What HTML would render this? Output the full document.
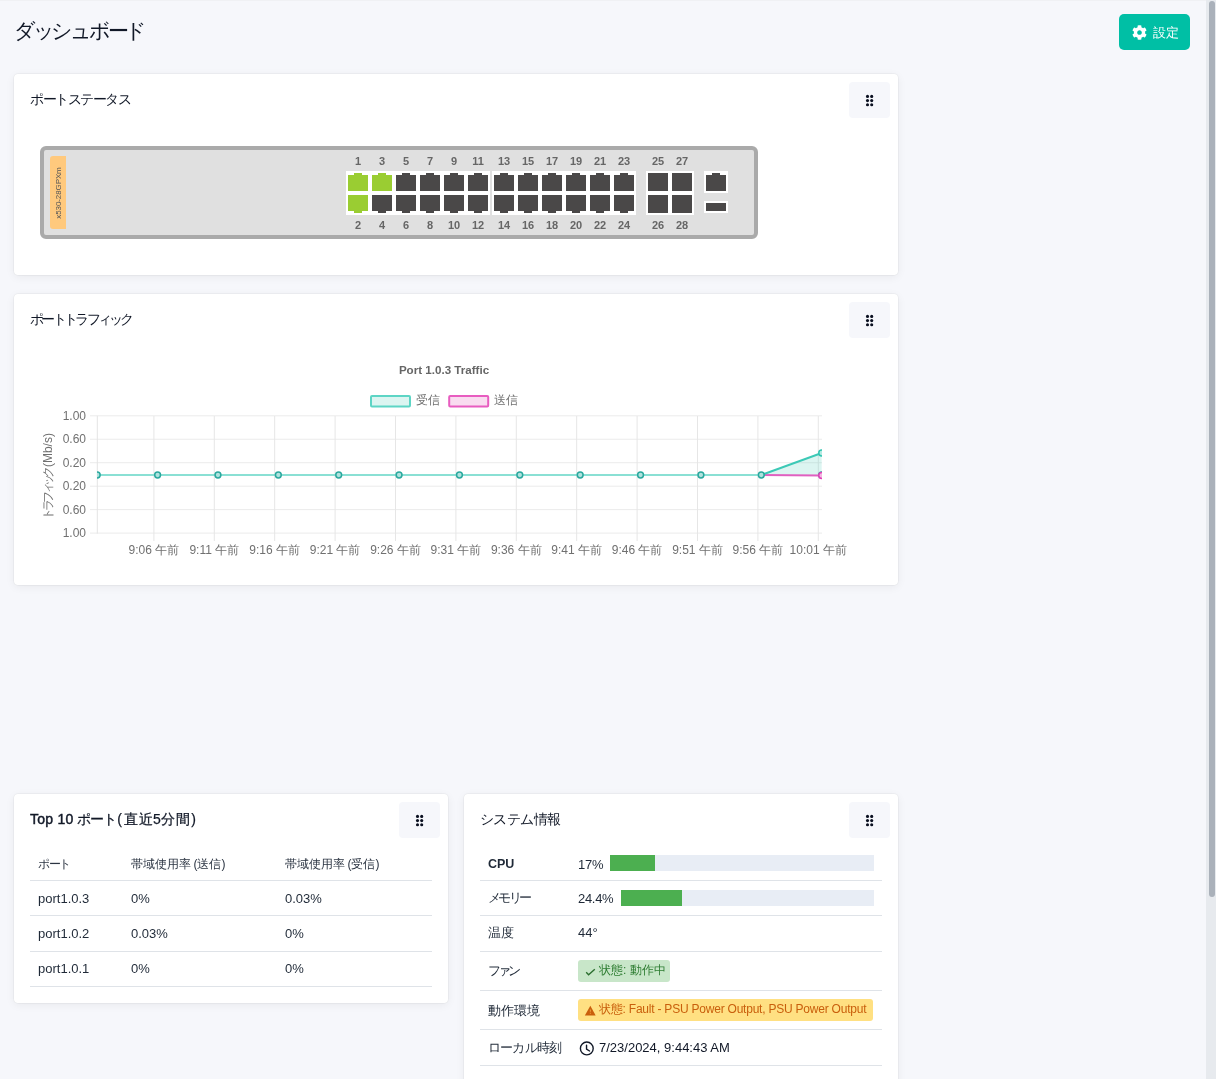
<!DOCTYPE html>
<html><head><meta charset="utf-8">
<style>
html,body{margin:0;padding:0;}
body{width:1216px;height:1079px;overflow:hidden;background:#f6f7fb;font-family:"Liberation Sans", sans-serif;color:#111827;position:relative;}
.topline{position:absolute;left:0;top:0;width:1206px;height:1px;background:#f0f1f4;}
.abs{position:absolute;}
.card{position:absolute;background:#fff;border-radius:4px;box-shadow:0 0 0 1px rgba(0,0,0,0.03),0 0 1px rgba(0,0,0,0.08),0 2px 10px rgba(0,0,0,0.06);}
.ct{position:absolute;font-size:14px;color:#111827;line-height:16px;white-space:nowrap;}
.mb{position:absolute;width:41px;height:36px;background:#f6f7fb;border-radius:4px;}
.mb svg{position:absolute;left:16px;top:12px;fill:#0b1020;}
.wb{position:absolute;background:#fff;}
.pt,.pb,.sq,.dk{position:absolute;width:20px;background:#4a4848;}
.pt{height:18px;clip-path:polygon(0 2px,6px 2px,6px 0,14px 0,14px 2px,20px 2px,20px 18px,0 18px);}
.pb{height:18px;clip-path:polygon(0 0,20px 0,20px 16px,14px 16px,14px 18px,6px 18px,6px 16px,0 16px);}
.sq{height:18px;}
.g{background:#9acd32;}
.lbl{position:absolute;width:40px;text-align:center;font-size:11px;font-weight:bold;color:#666;line-height:14px;}
.scroll{position:absolute;left:1206px;top:0;width:10px;height:1079px;background:#e7eaee;}
.thumb{position:absolute;left:1209px;top:1px;width:6px;height:896px;background:#aab1ba;border-radius:3px;}
.hl{position:absolute;height:1px;background:#dfe3e8;}
.th{position:absolute;font-size:12px;line-height:16px;color:#2b3442;white-space:nowrap;}
.td{position:absolute;font-size:13px;line-height:16px;color:#1f2937;white-space:nowrap;}
.bar{position:absolute;height:16px;background:#e8edf5;}
.bar i{position:absolute;left:0;top:0;height:16px;background:#4caf50;}
</style></head><body>
<div id="root" style="position:absolute;left:0;top:0;width:1216px;height:1079px;will-change:transform">
<div class="topline"></div>
<div class="abs" style="left:14px;top:18px;font-size:21px;line-height:26px;color:#111827;letter-spacing:-3.3px">ダッシュボード</div>
<div class="abs" style="left:1119px;top:14px;width:71px;height:36px;background:#00bfa5;border-radius:5px;"></div>
<svg class="abs" style="left:1132px;top:25px" width="15" height="15" viewBox="0 0 512 512"><path fill="#fff" d="M487.4 315.7l-42.6-24.6c4.3-23.2 4.3-47 0-70.2l42.6-24.6c4.9-2.8 7.1-8.6 5.5-14-11.1-35.6-30-67.8-54.7-94.6-3.8-4.1-10-5.1-14.8-2.3L380.8 110c-17.9-15.4-38.5-27.3-60.8-35.1V25.8c0-5.6-3.9-10.5-9.4-11.7-36.7-8.2-74.3-7.8-109.2 0-5.5 1.2-9.4 6.1-9.4 11.7V75c-22.2 7.9-42.8 19.8-60.8 35.1L88.7 85.5c-4.9-2.8-11-1.9-14.8 2.3-24.7 26.7-43.6 58.9-54.7 94.6-1.7 5.4.6 11.2 5.5 14L67.3 221c-4.3 23.2-4.3 47 0 70.2l-42.6 24.6c-4.9 2.8-7.1 8.6-5.5 14 11.1 35.6 30 67.8 54.7 94.6 3.8 4.1 10 5.1 14.8 2.3l42.6-24.6c17.9 15.4 38.5 27.3 60.8 35.1v49.2c0 5.6 3.9 10.5 9.4 11.7 36.7 8.2 74.3 7.8 109.2 0 5.5-1.2 9.4-6.1 9.4-11.7v-49.2c22.2-7.9 42.8-19.8 60.8-35.1l42.6 24.6c4.9 2.8 11 1.9 14.8-2.3 24.7-26.7 43.6-58.9 54.7-94.6 1.5-5.5-.7-11.3-5.6-14.1zM256 336c-44.1 0-80-35.9-80-80s35.9-80 80-80 80 35.9 80 80-35.9 80-80 80z"/></svg>
<div class="abs" style="left:1153px;top:24.5px;font-size:12.5px;line-height:16px;color:#fff">設定</div>

<div class="card" style="left:14px;top:74px;width:884px;height:201px"></div>
<div class="ct" style="left:30px;top:91px;letter-spacing:-1.45px">ポートステータス</div>
<div class="mb" style="left:849px;top:82px"><svg width="9" height="13" viewBox="0 0 9 13"><circle cx="2.5" cy="2.4" r="1.55"/><circle cx="6.7" cy="2.4" r="1.55"/><circle cx="2.5" cy="6.6" r="1.55"/><circle cx="6.7" cy="6.6" r="1.55"/><circle cx="2.5" cy="10.8" r="1.55"/><circle cx="6.7" cy="10.8" r="1.55"/></svg></div>
<div class="abs" style="left:40px;top:146px;width:710px;height:85px;border:4px solid #aaa;border-radius:6px;background:#e0e0e0"></div>
<div class="abs" style="left:50px;top:156px;width:16px;height:73px;background:#ffc97d;border-radius:3px 0 0 3px"></div>
<div class="abs" style="left:58.8px;top:193px;width:0;height:0"><div style="position:absolute;left:-40px;top:-6px;width:80px;text-align:center;font-size:8px;line-height:12px;color:#555;letter-spacing:-0.1px;transform:rotate(-90deg)">x530-28GPXm</div></div>
<div class="wb" style="left:346px;top:171px;width:144px;height:44px"></div>
<div class="pt g" style="left:348px;top:173px"></div>
<div class="pb g" style="left:348px;top:195px"></div>
<div class="lbl" style="left:338px;top:154px">1</div>
<div class="lbl" style="left:338px;top:218px">2</div>
<div class="pt g" style="left:372px;top:173px"></div>
<div class="pb " style="left:372px;top:195px"></div>
<div class="lbl" style="left:362px;top:154px">3</div>
<div class="lbl" style="left:362px;top:218px">4</div>
<div class="pt " style="left:396px;top:173px"></div>
<div class="pb " style="left:396px;top:195px"></div>
<div class="lbl" style="left:386px;top:154px">5</div>
<div class="lbl" style="left:386px;top:218px">6</div>
<div class="pt " style="left:420px;top:173px"></div>
<div class="pb " style="left:420px;top:195px"></div>
<div class="lbl" style="left:410px;top:154px">7</div>
<div class="lbl" style="left:410px;top:218px">8</div>
<div class="pt " style="left:444px;top:173px"></div>
<div class="pb " style="left:444px;top:195px"></div>
<div class="lbl" style="left:434px;top:154px">9</div>
<div class="lbl" style="left:434px;top:218px">10</div>
<div class="pt " style="left:468px;top:173px"></div>
<div class="pb " style="left:468px;top:195px"></div>
<div class="lbl" style="left:458px;top:154px">11</div>
<div class="lbl" style="left:458px;top:218px">12</div>
<div class="wb" style="left:492px;top:171px;width:144px;height:44px"></div>
<div class="pt " style="left:494px;top:173px"></div>
<div class="pb " style="left:494px;top:195px"></div>
<div class="lbl" style="left:484px;top:154px">13</div>
<div class="lbl" style="left:484px;top:218px">14</div>
<div class="pt " style="left:518px;top:173px"></div>
<div class="pb " style="left:518px;top:195px"></div>
<div class="lbl" style="left:508px;top:154px">15</div>
<div class="lbl" style="left:508px;top:218px">16</div>
<div class="pt " style="left:542px;top:173px"></div>
<div class="pb " style="left:542px;top:195px"></div>
<div class="lbl" style="left:532px;top:154px">17</div>
<div class="lbl" style="left:532px;top:218px">18</div>
<div class="pt " style="left:566px;top:173px"></div>
<div class="pb " style="left:566px;top:195px"></div>
<div class="lbl" style="left:556px;top:154px">19</div>
<div class="lbl" style="left:556px;top:218px">20</div>
<div class="pt " style="left:590px;top:173px"></div>
<div class="pb " style="left:590px;top:195px"></div>
<div class="lbl" style="left:580px;top:154px">21</div>
<div class="lbl" style="left:580px;top:218px">22</div>
<div class="pt " style="left:614px;top:173px"></div>
<div class="pb " style="left:614px;top:195px"></div>
<div class="lbl" style="left:604px;top:154px">23</div>
<div class="lbl" style="left:604px;top:218px">24</div>
<div class="wb" style="left:646px;top:171px;width:48px;height:44px"></div>
<div class="sq" style="left:648px;top:173px"></div>
<div class="sq" style="left:648px;top:195px"></div>
<div class="lbl" style="left:638px;top:154px">25</div>
<div class="lbl" style="left:638px;top:218px">26</div>
<div class="sq" style="left:672px;top:173px"></div>
<div class="sq" style="left:672px;top:195px"></div>
<div class="lbl" style="left:662px;top:154px">27</div>
<div class="lbl" style="left:662px;top:218px">28</div>
<div class="wb" style="left:704px;top:171px;width:24px;height:22px"></div>
<div class="pt" style="left:706px;top:173px"></div>
<div class="wb" style="left:704px;top:201px;width:24px;height:12px"></div>
<div class="dk" style="left:706px;top:203px;width:20px;height:8px"></div>

<div class="card" style="left:14px;top:294px;width:884px;height:291px"></div>
<div class="ct" style="left:30px;top:311px;letter-spacing:-2.7px">ポートトラフィック</div>
<div class="mb" style="left:849px;top:302px"><svg width="9" height="13" viewBox="0 0 9 13"><circle cx="2.5" cy="2.4" r="1.55"/><circle cx="6.7" cy="2.4" r="1.55"/><circle cx="2.5" cy="6.6" r="1.55"/><circle cx="6.7" cy="6.6" r="1.55"/><circle cx="2.5" cy="10.8" r="1.55"/><circle cx="6.7" cy="10.8" r="1.55"/></svg></div>
<svg class="chart" width="1216" height="1079" viewBox="0 0 1216 1079" style="position:absolute;left:0;top:0">
<line x1="90" y1="415.8" x2="822" y2="415.8" stroke="#ebebeb" stroke-width="1"/>
<text x="86" y="420.0" text-anchor="end" font-size="12" fill="#707070" font-family='Liberation Sans'>1.00</text>
<line x1="90" y1="439.26" x2="822" y2="439.26" stroke="#ebebeb" stroke-width="1"/>
<text x="86" y="443.46" text-anchor="end" font-size="12" fill="#707070" font-family='Liberation Sans'>0.60</text>
<line x1="90" y1="462.72" x2="822" y2="462.72" stroke="#ebebeb" stroke-width="1"/>
<text x="86" y="466.92" text-anchor="end" font-size="12" fill="#707070" font-family='Liberation Sans'>0.20</text>
<line x1="90" y1="486.18" x2="822" y2="486.18" stroke="#ebebeb" stroke-width="1"/>
<text x="86" y="490.38" text-anchor="end" font-size="12" fill="#707070" font-family='Liberation Sans'>0.20</text>
<line x1="90" y1="509.64" x2="822" y2="509.64" stroke="#ebebeb" stroke-width="1"/>
<text x="86" y="513.84" text-anchor="end" font-size="12" fill="#707070" font-family='Liberation Sans'>0.60</text>
<line x1="90" y1="533.1" x2="822" y2="533.1" stroke="#ebebeb" stroke-width="1"/>
<text x="86" y="537.3" text-anchor="end" font-size="12" fill="#707070" font-family='Liberation Sans'>1.00</text>
<line x1="97.3" y1="415.8" x2="97.3" y2="533.6" stroke="#e4e4e4"/>
<line x1="153.9" y1="416" x2="153.9" y2="541" stroke="#e6e6e6"/>
<text x="153.9" y="554" text-anchor="middle" font-size="12" fill="#707070" font-family='Liberation Sans'>9:06 午前</text>
<line x1="214.3" y1="416" x2="214.3" y2="541" stroke="#e6e6e6"/>
<text x="214.3" y="554" text-anchor="middle" font-size="12" fill="#707070" font-family='Liberation Sans'>9:11 午前</text>
<line x1="274.7" y1="416" x2="274.7" y2="541" stroke="#e6e6e6"/>
<text x="274.7" y="554" text-anchor="middle" font-size="12" fill="#707070" font-family='Liberation Sans'>9:16 午前</text>
<line x1="335.1" y1="416" x2="335.1" y2="541" stroke="#e6e6e6"/>
<text x="335.1" y="554" text-anchor="middle" font-size="12" fill="#707070" font-family='Liberation Sans'>9:21 午前</text>
<line x1="395.5" y1="416" x2="395.5" y2="541" stroke="#e6e6e6"/>
<text x="395.5" y="554" text-anchor="middle" font-size="12" fill="#707070" font-family='Liberation Sans'>9:26 午前</text>
<line x1="455.9" y1="416" x2="455.9" y2="541" stroke="#e6e6e6"/>
<text x="455.9" y="554" text-anchor="middle" font-size="12" fill="#707070" font-family='Liberation Sans'>9:31 午前</text>
<line x1="516.3" y1="416" x2="516.3" y2="541" stroke="#e6e6e6"/>
<text x="516.3" y="554" text-anchor="middle" font-size="12" fill="#707070" font-family='Liberation Sans'>9:36 午前</text>
<line x1="576.7" y1="416" x2="576.7" y2="541" stroke="#e6e6e6"/>
<text x="576.7" y="554" text-anchor="middle" font-size="12" fill="#707070" font-family='Liberation Sans'>9:41 午前</text>
<line x1="637.1" y1="416" x2="637.1" y2="541" stroke="#e6e6e6"/>
<text x="637.1" y="554" text-anchor="middle" font-size="12" fill="#707070" font-family='Liberation Sans'>9:46 午前</text>
<line x1="697.5" y1="416" x2="697.5" y2="541" stroke="#e6e6e6"/>
<text x="697.5" y="554" text-anchor="middle" font-size="12" fill="#707070" font-family='Liberation Sans'>9:51 午前</text>
<line x1="757.9" y1="416" x2="757.9" y2="541" stroke="#e6e6e6"/>
<text x="757.9" y="554" text-anchor="middle" font-size="12" fill="#707070" font-family='Liberation Sans'>9:56 午前</text>
<line x1="818.3" y1="416" x2="818.3" y2="541" stroke="#e6e6e6"/>
<text x="818.3" y="554" text-anchor="middle" font-size="12" fill="#707070" font-family='Liberation Sans'>10:01 午前</text>
<text transform="translate(51.6,476.3) rotate(-90)" text-anchor="middle" font-size="12" fill="#707070" font-family='Liberation Sans'><tspan style="letter-spacing:-3.6px">トラフィック</tspan><tspan dx="2">(Mb/s)</tspan></text>
<text x="444" y="373.5" text-anchor="middle" font-size="11.6" font-weight="bold" fill="#666" font-family='Liberation Sans'>Port 1.0.3 Traffic</text>
<rect x="371" y="396" width="39" height="10.5" fill="#dcf5f1" stroke="#5dd5c5" stroke-width="2" rx="1"/>
<text x="416" y="404" font-size="12" fill="#707070" font-family='Liberation Sans'>受信</text>
<rect x="449.2" y="396" width="39" height="10.5" fill="#f9dcf0" stroke="#e85cc0" stroke-width="2" rx="1"/>
<text x="494" y="404" font-size="12" fill="#707070" font-family='Liberation Sans'>送信</text>
<defs><clipPath id="ca"><rect x="97" y="410" width="725" height="130"/></clipPath></defs>
<g clip-path="url(#ca)">
<polygon points="761.3,475 821.67,453 821.67,475" fill="rgba(60,200,175,0.18)"/>
<polyline points="97.23,475 761.3,475 821.67,475.5" fill="none" stroke="#e060c0" stroke-width="2"/>
<polyline points="97.23,475 761.3,475" fill="none" stroke="#8ae0d4" stroke-width="2"/>
<polyline points="761.3,475 821.67,453" fill="none" stroke="#3cc9b6" stroke-width="2"/>
<circle cx="97.23" cy="475" r="2.9" fill="#b0e3de" stroke="#2aa89e" stroke-width="1.5"/>
<circle cx="157.6" cy="475" r="2.9" fill="#b0e3de" stroke="#2aa89e" stroke-width="1.5"/>
<circle cx="217.97" cy="475" r="2.9" fill="#b0e3de" stroke="#2aa89e" stroke-width="1.5"/>
<circle cx="278.34" cy="475" r="2.9" fill="#b0e3de" stroke="#2aa89e" stroke-width="1.5"/>
<circle cx="338.71" cy="475" r="2.9" fill="#b0e3de" stroke="#2aa89e" stroke-width="1.5"/>
<circle cx="399.08" cy="475" r="2.9" fill="#b0e3de" stroke="#2aa89e" stroke-width="1.5"/>
<circle cx="459.45" cy="475" r="2.9" fill="#b0e3de" stroke="#2aa89e" stroke-width="1.5"/>
<circle cx="519.82" cy="475" r="2.9" fill="#b0e3de" stroke="#2aa89e" stroke-width="1.5"/>
<circle cx="580.19" cy="475" r="2.9" fill="#b0e3de" stroke="#2aa89e" stroke-width="1.5"/>
<circle cx="640.56" cy="475" r="2.9" fill="#b0e3de" stroke="#2aa89e" stroke-width="1.5"/>
<circle cx="700.93" cy="475" r="2.9" fill="#b0e3de" stroke="#2aa89e" stroke-width="1.5"/>
<circle cx="761.3" cy="475" r="2.9" fill="#b0e3de" stroke="#2aa89e" stroke-width="1.5"/>
<circle cx="821.67" cy="475" r="2.9" fill="#b0e3de" stroke="#2aa89e" stroke-width="1.5"/>
<circle cx="821.67" cy="453" r="2.9" fill="#b5ebe3" stroke="#30c4b0" stroke-width="1.5"/>
<circle cx="821.67" cy="475.5" r="2.9" fill="#f3b5e0" stroke="#e040b8" stroke-width="1.5"/>
</g>
</svg>

<div class="card" style="left:14px;top:794px;width:434px;height:209px"></div>
<div class="ct" style="left:30px;top:811px;"><span style="-webkit-text-stroke:0.45px #111827;letter-spacing:0.25px">Top 10</span> <span style="letter-spacing:-1.2px;-webkit-text-stroke:0.25px #111827">ポート</span><span style="margin-left:1.5px;-webkit-text-stroke:0.25px #111827">(<span style="margin-left:2px;letter-spacing:0.5px">直近5分間</span><span style="margin-left:1px">)</span></span></div>
<div class="mb" style="left:399px;top:802px"><svg width="9" height="13" viewBox="0 0 9 13"><circle cx="2.5" cy="2.4" r="1.55"/><circle cx="6.7" cy="2.4" r="1.55"/><circle cx="2.5" cy="6.6" r="1.55"/><circle cx="6.7" cy="6.6" r="1.55"/><circle cx="2.5" cy="10.8" r="1.55"/><circle cx="6.7" cy="10.8" r="1.55"/></svg></div>
<div class="hl" style="left:30px;top:880px;width:402px"></div>
<div class="hl" style="left:30px;top:915px;width:402px"></div>
<div class="hl" style="left:30px;top:951px;width:402px"></div>
<div class="hl" style="left:30px;top:986px;width:402px"></div>
<div class="th" style="left:38px;top:856px;letter-spacing:-1.5px">ポート</div>
<div class="th" style="left:131px;top:856px">帯域使用率<span style="margin-left:2.5px">(送信)</span></div>
<div class="th" style="left:285px;top:856px">帯域使用率<span style="margin-left:2.5px">(受信)</span></div>
<div class="td" style="left:38px;top:891px">port1.0.3</div>
<div class="td" style="left:131px;top:891px">0%</div>
<div class="td" style="left:285px;top:891px">0.03%</div>
<div class="td" style="left:38px;top:926px">port1.0.2</div>
<div class="td" style="left:131px;top:926px">0.03%</div>
<div class="td" style="left:285px;top:926px">0%</div>
<div class="td" style="left:38px;top:961px">port1.0.1</div>
<div class="td" style="left:131px;top:961px">0%</div>
<div class="td" style="left:285px;top:961px">0%</div>

<div class="card" style="left:464px;top:794px;width:434px;height:300px"></div>
<div class="ct" style="left:480px;top:811px;letter-spacing:-0.6px">システム情報</div>
<div class="mb" style="left:849px;top:802px"><svg width="9" height="13" viewBox="0 0 9 13"><circle cx="2.5" cy="2.4" r="1.55"/><circle cx="6.7" cy="2.4" r="1.55"/><circle cx="2.5" cy="6.6" r="1.55"/><circle cx="6.7" cy="6.6" r="1.55"/><circle cx="2.5" cy="10.8" r="1.55"/><circle cx="6.7" cy="10.8" r="1.55"/></svg></div>
<div class="hl" style="left:480px;top:880px;width:402px"></div>
<div class="hl" style="left:480px;top:915px;width:402px"></div>
<div class="hl" style="left:480px;top:951px;width:402px"></div>
<div class="hl" style="left:480px;top:990px;width:402px"></div>
<div class="hl" style="left:480px;top:1029px;width:402px"></div>
<div class="hl" style="left:480px;top:1065px;width:402px"></div>
<div class="td" style="left:488px;top:856px;font-weight:bold;font-size:12.5px">CPU</div>
<div class="td" style="left:488px;top:890px;letter-spacing:-2.7px">メモリー</div>
<div class="td" style="left:488px;top:925px">温度</div>
<div class="td" style="left:488px;top:963px;letter-spacing:-3px">ファン</div>
<div class="td" style="left:488px;top:1003px">動作環境</div>
<div class="td" style="left:488px;top:1040px;letter-spacing:-0.8px">ローカル時刻</div>
<div class="td" style="left:578px;top:857px;letter-spacing:-0.2px">17%</div>
<div class="td" style="left:578px;top:891px;letter-spacing:-0.3px">24.4%</div>
<div class="td" style="left:578px;top:925px">44°</div>
<div class="bar" style="left:610px;top:855px;width:264px"><i style="width:45px"></i></div>
<div class="bar" style="left:621px;top:890px;width:253px"><i style="width:61px"></i></div>
<div class="abs" style="left:578px;top:960px;width:92px;height:22px;background:#c8e6c9;border-radius:3px"></div>
<svg class="abs" style="left:584px;top:966px" width="14" height="12" viewBox="0 0 14 12"><path d="M2.2 6.3L4.6 8.8L10.8 3.2" fill="none" stroke="#2b6e2f" stroke-width="1.35"/></svg>
<div class="abs" style="left:599px;top:962px;font-size:12px;line-height:16px;color:#2e7d32">状態: 動作中</div>
<div class="abs" style="left:578px;top:999px;width:295px;height:22px;background:#ffe082;border-radius:3px"></div>
<svg class="abs" style="left:584px;top:1004px" width="12" height="13" viewBox="0 0 24 26"><path d="M12.7 3.6L1.7 23H23.3z" fill="#c95f0c"/><rect x="11.7" y="11" width="2" height="4.5" fill="#f0a040"/><rect x="11.7" y="17.5" width="2" height="2" fill="#f0a040"/></svg>
<div class="abs" style="left:599px;top:1001px;font-size:12px;line-height:16px;color:#c95f0c;letter-spacing:-0.22px">状態: Fault - PSU Power Output, PSU Power Output</div>
<svg class="abs" style="left:579px;top:1041px" width="16" height="16" viewBox="0 0 24 24"><circle cx="11.7" cy="11.2" r="9.6" fill="none" stroke="#111827" stroke-width="2.1"/><path d="M11.3 6.3V12.3l4.5 2.7" fill="none" stroke="#111827" stroke-width="2.1" stroke-linecap="round" stroke-linejoin="round"/></svg>
<div class="abs" style="left:599px;top:1040px;font-size:13px;line-height:16px;color:#111827">7/23/2024, 9:44:43 AM</div>

<div class="scroll"></div><div class="thumb"></div>
</div>
</body></html>
